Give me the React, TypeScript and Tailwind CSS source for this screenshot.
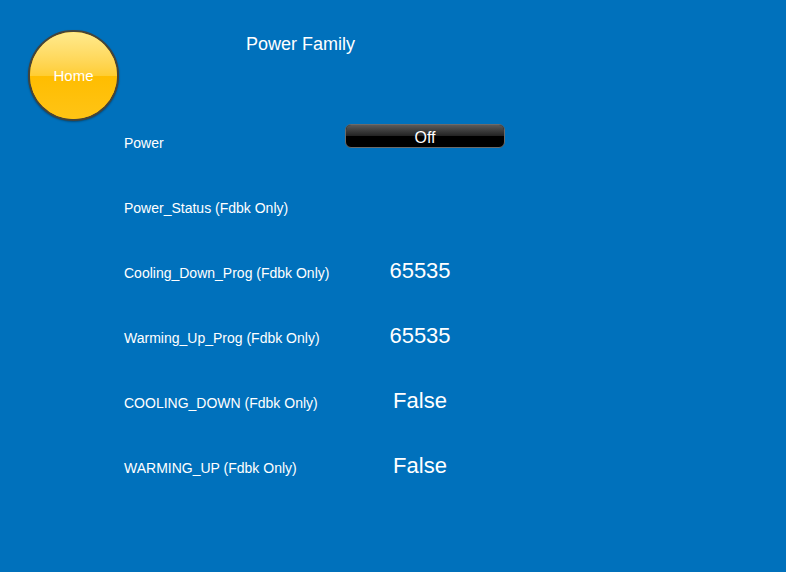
const ROWS = [
  { label: "Power", kind: "button", value: "Off" },
  { label: "Power_Status (Fdbk Only)", kind: "text", value: "" },
  { label: "Cooling_Down_Prog (Fdbk Only)", kind: "text", value: "65535" },
  { label: "Warming_Up_Prog (Fdbk Only)", kind: "text", value: "65535" },
  { label: "COOLING_DOWN (Fdbk Only)", kind: "text", value: "False" },
  { label: "WARMING_UP (Fdbk Only)", kind: "text", value: "False" },
] as const;

export default function App() {
  return (
    <div className="h-[572px] w-[786px] overflow-hidden bg-[#0071bc] font-['Liberation_Sans',Arial,sans-serif] text-white">
      <header className="flex h-[110px] items-start pl-[28px] pt-[30px]">
        <HomeButton />
        <h1 className="ml-[127px] mt-[3px] text-[18px] leading-[22px] font-normal">Power Family</h1>
      </header>

      <section className="flex flex-col">
        {ROWS.map((row) =>
          row.kind === "button" ? (
            <div key={row.label} className="flex h-[65px] items-center pl-[124px]">
              <span className="w-[216px] text-[14px] leading-[16px]">{row.label}</span>
              <OffButton label={row.value} />
            </div>
          ) : (
            <div key={row.label} className="flex h-[65px] items-center pl-[124px]">
              <span className="w-[216px] text-[14px] leading-[16px]">{row.label}</span>
              <span className="mb-[4px] w-[160px] text-center text-[22px] leading-[24px]">{row.value}</span>
            </div>
          )
        )}
      </section>
    </div>
  );
}

function HomeButton() {
  return (
    <button className="relative flex h-[91px] w-[91px] shrink-0 items-center justify-center overflow-hidden rounded-full border-2 border-[#45443a] bg-[#ffbd00] shadow-[0_1px_2px_rgba(0,0,0,0.35)]">
      <span className="absolute inset-x-0 top-0 h-1/2 bg-gradient-to-b from-[#ffea8c] to-[#ffcd30]" aria-hidden />
      <span className="absolute inset-x-0 bottom-0 h-1/2 bg-gradient-to-b from-[#ffbd00] to-[#ffc414]" aria-hidden />
      <span className="relative text-[15px] leading-[18px] text-white">Home</span>
    </button>
  );
}

function OffButton({ label }: { label: string }) {
  return (
    <button className="relative mb-[13px] ml-[5px] flex h-[24px] w-[160px] shrink-0 items-center justify-center overflow-hidden rounded-[6px] border border-[#6b6b6b] bg-black">
      <span className="absolute inset-x-0 top-0 h-1/2 bg-gradient-to-b from-[#5a5a5a] to-[#232323]" aria-hidden />
      <span className="relative mt-[3px] text-[16px] leading-[18px] text-white">{label}</span>
    </button>
  );
}
